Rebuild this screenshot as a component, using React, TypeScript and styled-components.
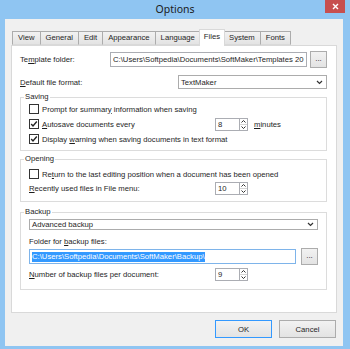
import React from "react";
import styled, { createGlobalStyle } from "styled-components";

const Global = createGlobalStyle`
  html, body { margin: 0; padding: 0; background: #8fc5f2; }
  body { font-family: "Liberation Sans", Arial, sans-serif; font-size: 7.7px; color: #1e1e1e; }
  * { box-sizing: border-box; }
`;

const Window = styled.div`
  width: 350px;
  height: 349px;
  background: #8fc5f2;
  display: flex;
  flex-direction: column;
  position: relative;
`;

const TitleBar = styled.div`
  height: 19px;
  display: flex;
  align-items: center;
  justify-content: center;
  font-family: "Noto Sans", sans-serif;
  font-size: 10.5px;
  color: #1b1b1b;
  padding-bottom: 1px;
`;

const CloseBtn = styled.div`
  position: absolute;
  top: 0;
  right: 5px;
  width: 20px;
  height: 13px;
  background: #c74f4f;
  display: flex;
  align-items: center;
  justify-content: center;
`;

const Client = styled.div`
  flex: 1;
  margin: 0 7px 3px 5px;
  background: #f0f0f0;
  display: flex;
  flex-direction: column;
  padding: 10px 0 8px 0;
`;

const TabRow = styled.div`
  display: flex;
  align-items: flex-end;
  height: 16px;
  padding-left: 8px;
  position: relative;
  z-index: 2;
`;

const Tab = styled.div<{ $active?: boolean }>`
  height: ${(p) => (p.$active ? "17px" : "14px")};
  margin: ${(p) => (p.$active ? "0 -1px -1px -2px" : "0 0 0 -1px")};
  padding: 0 ${(p) => (p.$active ? "4px" : "5px")};
  border: 1px solid ${(p) => (p.$active ? "#d9d9d9" : "#acacac")};
  border-bottom: ${(p) => (p.$active ? "none" : "1px solid #d9d9d9")};
  background: ${(p) => (p.$active ? "#ffffff" : "linear-gradient(#f2f2f2, #e3e3e3)")};
  display: flex;
  align-items: center;
  justify-content: center;
  white-space: nowrap;
  position: relative;
  z-index: ${(p) => (p.$active ? 3 : 1)};
  padding-bottom: ${(p) => (p.$active ? "3px" : "1px")};
`;

const Pane = styled.div`
  height: 268px;
  margin: 0 6px;
  background: #ffffff;
  border: 1px solid #d9d9d9;
  display: flex;
  flex-direction: column;
  padding: 5px 9px 0 8px;
`;

const Row = styled.div<{ $mt?: number; $h?: number }>`
  display: flex;
  align-items: center;
  margin-top: ${(p) => p.$mt ?? 0}px;
  height: ${(p) => p.$h ?? 14}px;
  white-space: nowrap;
`;

const Label = styled.span<{ $w?: number }>`
  flex: ${(p) => (p.$w ? "none" : "1")};
  width: ${(p) => (p.$w ? `${p.$w}px` : "auto")};
  white-space: pre;
`;

const TextInput = styled.div<{ $w: number; $focus?: boolean }>`
  width: ${(p) => p.$w}px;
  height: 15px;
  border: 1px solid ${(p) => (p.$focus ? "#7eb4ea" : "#abadb3")};
  background: #fff;
  display: flex;
  align-items: center;
  padding-left: 2px;
  overflow: hidden;
  white-space: nowrap;
`;

const InputText = styled.span`
  min-width: 0;
  overflow: hidden;
  white-space: nowrap;
  text-overflow: clip;
`;

const Selected = styled.span`
  background: #3399ff;
  color: #fff;
  padding: 0 0 1px 0;
`;

const DotsBtn = styled.div<{ $ml?: number }>`
  width: 17px;
  height: 17px;
  margin-left: ${(p) => p.$ml ?? 3}px;
  border: 1px solid #acacac;
  background: linear-gradient(#f2f2f2, #e3e3e3);
  display: flex;
  align-items: center;
  justify-content: center;
  font-size: 8px;
  padding-bottom: 3px;
  flex: none;
`;

const Select = styled.div<{ $w?: number }>`
  width: ${(p) => (p.$w ? `${p.$w}px` : "auto")};
  flex: ${(p) => (p.$w ? "none" : "1")};
  height: 14px;
  border: 1px solid #acacac;
  background: #fff;
  display: flex;
  align-items: center;
  justify-content: space-between;
  padding: 0 3px 0 2px;
`;

const Group = styled.fieldset<{ $mt: number; $pt?: number; $pb: number; $gap?: number }>`
  margin: ${(p) => p.$mt}px 0 0 0;
  padding: ${(p) => p.$pt ?? 0}px 8px ${(p) => p.$pb}px 8px;
  border: 1px solid #dcdcdc;
  min-width: 0;
  display: flex;
  flex-direction: column;
  gap: ${(p) => p.$gap ?? 0}px;
`;

const Legend = styled.legend`
  padding: 0 1px;
  margin-left: -5px;
  line-height: 10px;
  height: 10px;
`;

const Check = styled.div`
  width: 10px;
  height: 10px;
  border: 1px solid #333333;
  background: #fff;
  margin-right: 3px;
  display: flex;
  align-items: center;
  justify-content: center;
  flex: none;
`;

const SpinWrap = styled.div`
  display: flex;
  height: 13px;
  margin-right: 6px;
`;

const SpinField = styled.div`
  width: 24px;
  height: 13px;
  border: 1px solid #abadb3;
  border-right: none;
  background: #fff;
  padding-left: 2px;
  display: flex;
  align-items: center;
`;

const SpinBtns = styled.div`
  width: 9px;
  height: 13px;
  border: 1px solid #abadb3;
  background: #fff;
  display: flex;
  flex-direction: column;
`;

const SpinHalf = styled.div<{ $top?: boolean }>`
  flex: 1;
  display: flex;
  align-items: center;
  justify-content: center;
  border-bottom: ${(p) => (p.$top ? "1px solid #d5d5d5" : "none")};
`;

const FooterRow = styled.div`
  display: flex;
  justify-content: flex-end;
  gap: 7px;
  margin-top: 7px;
  padding-right: 7px;
`;

const Button = styled.div<{ $default?: boolean }>`
  width: 57px;
  height: 18px;
  border: 1px solid ${(p) => (p.$default ? "#3399ff" : "#acacac")};
  background: linear-gradient(#f2f2f2, #e3e3e3);
  display: flex;
  align-items: center;
  justify-content: center;
`;

const U = styled.span`
  text-decoration: underline;
  text-underline-offset: 1px;
`;

const Chevron = () => (
  <svg width="7" height="5" viewBox="0 0 7 5">
    <polyline points="1,1 3.5,3.5 6,1" fill="none" stroke="#333" strokeWidth="1.2" />
  </svg>
);

const Tick = () => (
  <svg width="8" height="8" viewBox="0 0 8 8">
    <polyline points="1.2,4 3,6 6.8,1.5" fill="none" stroke="#222" strokeWidth="1.4" />
  </svg>
);

const Arrow = ({ up }: { up?: boolean }) => (
  <svg width="5" height="3" viewBox="0 0 5 3">
    <polyline
      points={up ? "0.5,2.5 2.5,0.5 4.5,2.5" : "0.5,0.5 2.5,2.5 4.5,0.5"}
      fill="none"
      stroke="#333"
      strokeWidth="1"
    />
  </svg>
);

const Spinner = ({ value }: { value: string }) => (
  <SpinWrap>
    <SpinField>{value}</SpinField>
    <SpinBtns>
      <SpinHalf $top>
        <Arrow up />
      </SpinHalf>
      <SpinHalf>
        <Arrow />
      </SpinHalf>
    </SpinBtns>
  </SpinWrap>
);

const tabs = ["View", "General", "Edit", "Appearance", "Language", "Files", "System", "Fonts"];

export default function App() {
  return (
    <>
      <Global />
      <Window>
        <TitleBar>Options</TitleBar>
        <CloseBtn>
          <svg width="7" height="7" viewBox="0 0 7 7">
            <path d="M1 1 L6 6 M6 1 L1 6" stroke="#fff" strokeWidth="1.4" />
          </svg>
        </CloseBtn>
        <Client>
          <TabRow>
            {tabs.map((t) => (
              <Tab key={t} $active={t === "Files"}>
                {t}
              </Tab>
            ))}
          </TabRow>
          <Pane>
            <Row $h={17}>
              <Label>
                Te<U>m</U>plate folder:
              </Label>
              <TextInput $w={197}>
                <InputText>C:\Users\Softpedia\Documents\SoftMaker\Templates 20</InputText>
              </TextInput>
              <DotsBtn>...</DotsBtn>
            </Row>
            <Row $mt={7}>
              <Label>
                <U>D</U>efault file format:
              </Label>
              <Select $w={149}>
                <span>TextMaker</span>
                <Chevron />
              </Select>
            </Row>
            <Group $mt={3} $pb={4} $gap={1}>
              <Legend>Saving</Legend>
              <Row>
                <Check />
                <Label>
                  Prompt for summar<U>y</U> information when saving
                </Label>
              </Row>
              <Row>
                <Check>
                  <Tick />
                </Check>
                <Label $w={173}>
                  <U>A</U>utosave documents every
                </Label>
                <Spinner value="8" />
                <Label>
                  <U>m</U>inutes
                </Label>
              </Row>
              <Row>
                <Check>
                  <Tick />
                </Check>
                <Label>
                  Display <U>w</U>arning when saving documents in text format
                </Label>
              </Row>
            </Group>
            <Group $mt={3} $pt={3} $pb={6}>
              <Legend>Opening</Legend>
              <Row>
                <Check />
                <Label>
                  Re<U>t</U>urn to the last editing position when a document has been opened
                </Label>
              </Row>
              <Row>
                <Label $w={186}>
                  <U>R</U>ecently used files in File menu:
                </Label>
                <Spinner value="10" />
              </Row>
            </Group>
            <Group $mt={5} $pt={2} $pb={8}>
              <Legend>Backup</Legend>
              <Select>
                <span>Advanced backup</span>
                <Chevron />
              </Select>
              <Row $mt={5} $h={13}>
                <Label>
                  Folder for <U>b</U>ackup files:
                </Label>
              </Row>
              <Row $h={17}>
                <TextInput $w={269} $focus>
                  <Selected>C:\Users\Softpedia\Documents\SoftMaker\Backup\</Selected>
                </TextInput>
                <DotsBtn $ml={5}>...</DotsBtn>
              </Row>
              <Row $mt={2}>
                <Label $w={186}>
                  <U>N</U>umber of backup files per document:
                </Label>
                <Spinner value="9" />
              </Row>
            </Group>
          </Pane>
          <FooterRow>
            <Button $default>OK</Button>
            <Button>Cancel</Button>
          </FooterRow>
        </Client>
      </Window>
    </>
  );
}
